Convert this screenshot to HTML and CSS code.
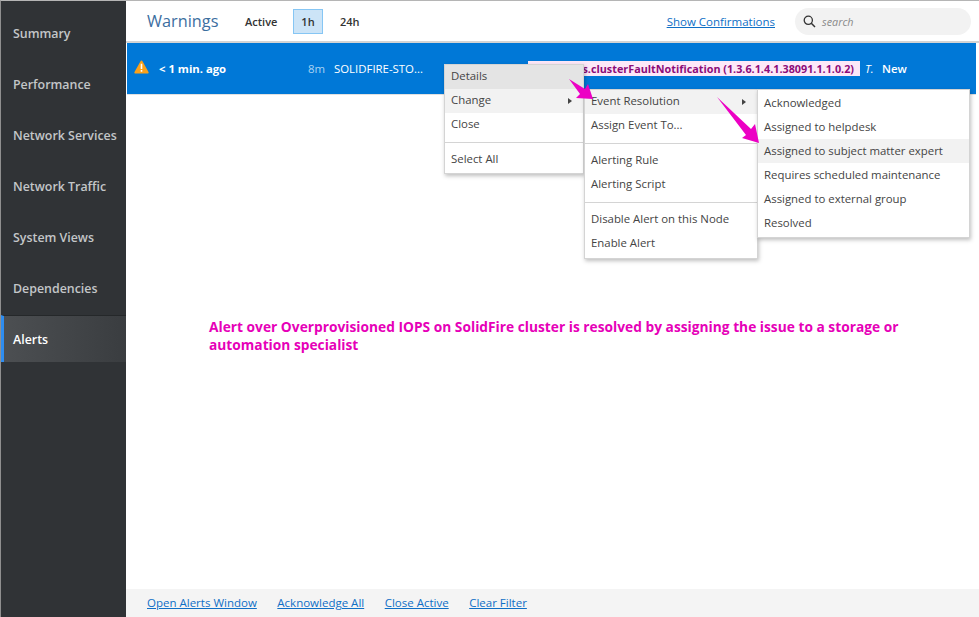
FILE: index.html
```html
<!DOCTYPE html>
<html lang="en">
<head>
<meta charset="utf-8">
<title>Warnings</title>
<link rel="stylesheet" href="styles.css">
</head>
<body>
<div class="app">
  <nav class="sidebar">
    <a class="nav-item">Summary</a>
    <a class="nav-item">Performance</a>
    <a class="nav-item">Network Services</a>
    <a class="nav-item">Network Traffic</a>
    <a class="nav-item">System Views</a>
    <a class="nav-item">Dependencies</a>
    <a class="nav-item active">Alerts</a>
  </nav>
  <main class="content">
    <header class="topbar">
      <h1 class="title">Warnings</h1>
      <button class="range range-active-label">Active</button>
      <button class="range selected">1h</button>
      <button class="range">24h</button>
      <a class="link confirm">Show Confirmations</a>
      <div class="search">
        <svg class="search-icon" width="13" height="13" viewBox="0 0 13 13"><circle cx="5.3" cy="5.3" r="4.1" fill="none" stroke="#333" stroke-width="1.3"/><path d="M8.3 8.3 12 12" stroke="#333" stroke-width="1.5"/></svg>
        <span>search</span>
      </div>
    </header>
    <div class="alert-row">
      <svg class="warn" width="15" height="14" viewBox="0 0 15 14"><path d="M7.5.5c.5 0 .8.3 1 .7l6 10.700c.4.8 0 1.600-.9 1.600H1.400c-.9 0-1.300-.8-.9-1.600l6-10.700c.2-.4.500-.7 1-.7z" fill="#f9a11b"/><path d="M6.700 3.800h1.600v5.200H6.700zM6.700 10h1.600v1.700H6.700z" fill="#fff"/></svg>
      <span class="age">&lt; 1 min. ago</span>
      <span class="dur">8m</span>
      <span class="node">SOLIDFIRE-STO...</span>
      <span class="peek"></span>
      <span class="tag">ons.clusterFaultNotification (1.3.6.1.4.1.38091.1.1.0.2)</span>
      <span class="type">T.</span>
      <span class="state">New</span>
    </div>
    <div class="body-area">
      <p class="note">Alert over Overprovisioned IOPS on SolidFire cluster is resolved by assigning the issue to a storage or automation specialist</p>
    </div>
    <footer class="footer">
      <a class="link">Open Alerts Window</a>
      <a class="link">Acknowledge All</a>
      <a class="link">Close Active</a>
      <a class="link">Clear Filter</a>
    </footer>
  </main>
</div>

<div class="menu menu-one">
  <div class="item pressed">Details</div>
  <div class="item hot has-sub">Change</div>
  <div class="item">Close</div>
  <div class="sep"></div>
  <div class="item">Select All</div>
</div>
<div class="menu menu-two">
  <div class="item hot has-sub">Event Resolution</div>
  <div class="item">Assign Event To...</div>
  <div class="sep"></div>
  <div class="item">Alerting Rule</div>
  <div class="item">Alerting Script</div>
  <div class="sep"></div>
  <div class="item">Disable Alert on this Node</div>
  <div class="item">Enable Alert</div>
</div>
<div class="menu menu-three">
  <div class="item">Acknowledged</div>
  <div class="item">Assigned to helpdesk</div>
  <div class="item hot">Assigned to subject matter expert</div>
  <div class="item">Requires scheduled maintenance</div>
  <div class="item">Assigned to external group</div>
  <div class="item">Resolved</div>
</div>

<svg class="arrows" width="979" height="617" viewBox="0 0 979 617">
  <path d="M569 79 585 89 588 84 593 99 576 98 580 94z" fill="#ec00c4"/>
  <path d="M717 97 751 129 755 124 759 143 742 138 746 135z" fill="#ec00c4"/>
</svg>
</body>
</html>
```
FILE: styles.css
```css
* { box-sizing: border-box; }
html, body { margin: 0; height: 617px; overflow: hidden; background: #fff; }
body { font-family: "Open Sans", "Noto Sans", sans-serif; font-size: 11.4px; color: #333; position: relative; }

.app { display: flex; height: 617px; border-top: 1px solid #b5b5b5; border-left: 1px solid #8f8f8f; }

.sidebar { width: 125px; flex: none; background: #303336; padding-top: 7px; display: flex; flex-direction: column; }
.nav-item { height: 51px; display: flex; align-items: center; padding-left: 12px; color: #c3c6c8; font-size: 12.4px; font-weight: 600; }
.nav-item.active { height: 47px; margin-top: 1px; color: #fff; border-top: 1px solid #25282a; border-left: 3px solid #2e8df0; padding-left: 9px; background: linear-gradient(90deg, #4c4f52, #3a3d40); }

.content { flex: 1; min-width: 0; display: flex; flex-direction: column; }

.topbar { height: 42px; flex: none; display: flex; align-items: center; padding: 0 8px 0 21px; border-bottom: 2px solid #d4d4d4; }
.title { margin: 0 26px 0 0; font-size: 16.3px; font-weight: 400; color: #3c6e9f; width: 71px; white-space: nowrap; }
.range { font: 600 11px "Open Sans", sans-serif; color: #333; background: none; border: 1px solid transparent; padding: 0; height: 25px; }
.range-active-label { width: 33px; margin-right: 16px; }
.selected { width: 30px; background: #cce4f7; border-color: #86c6f4; margin-right: 16px; }
.link { color: #0f6fc6; text-decoration: underline; font-size: 11.5px; white-space: nowrap; }
.confirm { margin-left: auto; margin-right: 20px; }
.search { width: 176px; height: 27px; border-radius: 14px; background: #f2f2f2; display: flex; align-items: center; gap: 6px; padding-left: 8px; color: #8a8a8a; font-style: italic; font-size: 10.8px; }
.search-icon { flex: none; }

.alert-row { height: 52px; flex: none; margin: 0 3px 0 1px; background: #0078d7; border-bottom: 1px solid #e0e0e0; display: flex; align-items: center; padding-left: 7px; color: #fff; white-space: nowrap; }
.warn { flex: none; margin-right: 10px; margin-top: -3px; }
.age { width: 149px; font-weight: 700; font-size: 11.3px; }
.dur { width: 26px; color: #a9d3f3; }
.node { width: 117px; }
.peek { width: 77px; }
.tag { width: 332px; height: 15px; background: #fde8f8; color: #8c0c78; font-weight: 700; font-size: 10.8px; line-height: 15px; text-align: right; padding-right: 6px; }
.type { width: 17px; margin-left: 5px; font-style: italic; }
.state { font-weight: 600; }

.body-area { flex: 1; min-height: 0; padding: 223px 60px 0 83px; }
.note { margin: 0; color: #e600b8; font-weight: 700; font-size: 13.75px; line-height: 18px; }

.footer { height: 28px; flex: none; background: #f4f4f4; display: flex; align-items: center; gap: 20.5px; padding: 0 0 2px 21px; }

.menu { position: absolute; background: #fff; border: 1px solid #d4d4d4; box-shadow: 1px 2px 4px rgba(0,0,0,.25); color: #444; }
.menu-one { left: 444px; top: 64px; width: 140px; height: 110px; }
.menu-two { left: 584px; top: 89px; width: 174px; height: 170px; }
.menu-three { left: 757px; top: 89px; width: 213px; height: 149px; padding-top: 1px; }
.item { height: 24px; line-height: 22px; padding-left: 6px; white-space: nowrap; position: relative; }
.menu-three .item { line-height: 23px; }
.pressed { background: #e4e4e4; }
.hot { background: #f2f2f2; }
.has-sub::after { content: ""; position: absolute; right: 11px; top: 9px; border-left: 4px solid #444; border-top: 3px solid transparent; border-bottom: 3px solid transparent; }
.sep { height: 1px; background: #d4d4d4; margin: 5px 0 5px; }
.arrows { position: absolute; left: 0; top: 0; pointer-events: none; }
```
